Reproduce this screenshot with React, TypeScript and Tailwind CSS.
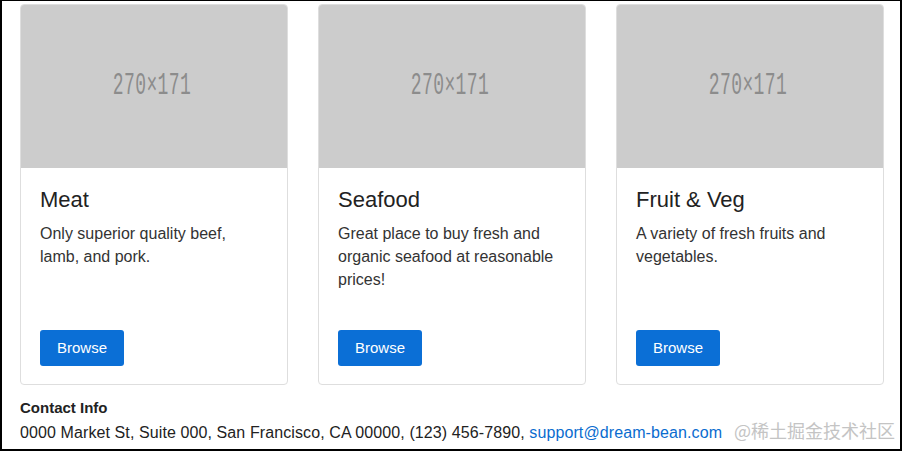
import React from "react";

const cards = [
  { title: "Meat", text: "Only superior quality beef, lamb, and pork." },
  { title: "Seafood", text: "Great place to buy fresh and organic seafood at reasonable prices!" },
  { title: "Fruit & Veg", text: "A variety of fresh fruits and vegetables." },
];

function Card({ title, text }: { title: string; text: string }) {
  return (
    <div className="flex h-[381px] w-[268px] flex-col overflow-hidden rounded-[4px] border border-[#dedede] bg-white">
      <div className="flex h-[163px] shrink-0 items-center justify-center bg-[#cccccc]">
        <span
          className="inline-block origin-center -translate-x-[2px] scale-y-[1.75] text-[18px] tracking-[0.4px] text-[#8c8c8c]"
          style={{ fontFamily: '"Liberation Mono", monospace' }}
        >
          270×171
        </span>
      </div>
      <div className="flex flex-1 flex-col px-[19px] pb-[18px] pt-[19px]">
        <h5 className="mb-[9px] text-[22px] leading-[26px] text-[#222]">{title}</h5>
        <p className="text-[16px] leading-[23px] text-[#333]">{text}</p>
        <div className="mt-auto">
          <button className="h-[36px] w-[84px] rounded-[3px] bg-[#0b6fd6] text-[15px] text-white">Browse</button>
        </div>
      </div>
    </div>
  );
}

export default function App() {
  return (
    <div
      className="flex h-[451px] w-[902px] flex-col border-t border-l-2 border-r-2 border-b-2 border-black bg-white"
      style={{ fontFamily: '"Liberation Sans", Arial, sans-serif' }}
    >
      <div className="flex gap-[30px] pl-[18px] pt-[3px]">
        {cards.map((c) => (
          <Card key={c.title} {...c} />
        ))}
      </div>
      <div className="pl-[18px] pt-[12px] text-[16px] text-[#222]">
        <div className="text-[15px] font-bold leading-[22px]">Contact Info</div>
        <div className="flex items-baseline whitespace-nowrap leading-[22px]">
          <span className="tracking-[0.1px]">
            0000 Market St, Suite 000, San Francisco, CA 00000, (123) 456-7890,{" "}
            <a className="text-[#0a6ccf]">support@dream-bean.com</a>
          </span>
          <span
            className="ml-[12px] text-[18px] text-[#c4c4c4]"
            style={{ fontFamily: '"Noto Sans CJK SC", "Noto Sans CJK JP", sans-serif' }}
          >
            @稀土掘金技术社区
          </span>
        </div>
      </div>
    </div>
  );
}
